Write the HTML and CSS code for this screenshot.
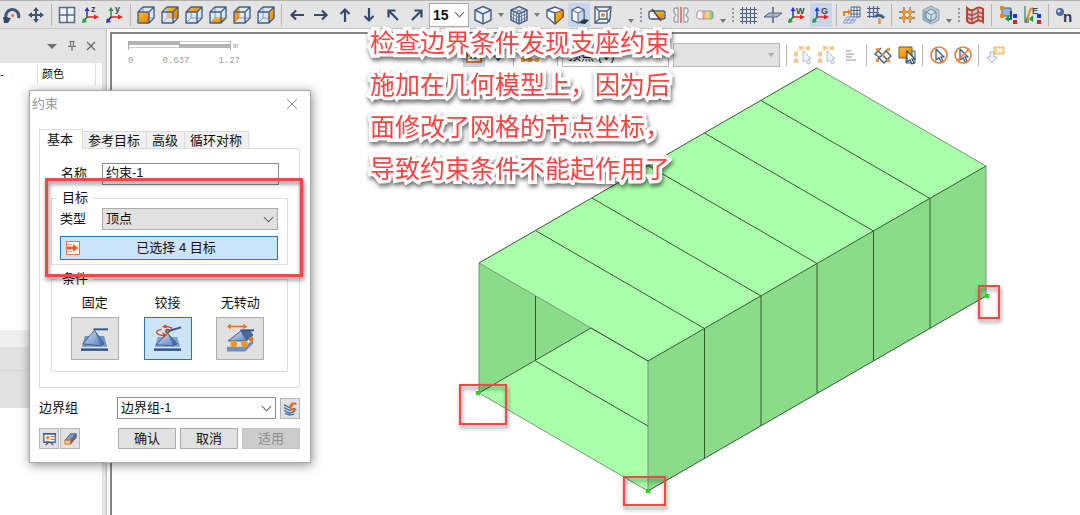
FILE: index.html
```html
<!DOCTYPE html>
<html lang="zh-CN">
<head>
<meta charset="utf-8">
<title>约束</title>
<link rel="stylesheet" href="styles.css">
</head>
<body>
<svg class="defs" width="0" height="0" aria-hidden="true">
  <defs>
    <linearGradient id="or" x1="0" y1="0" x2="1" y2="1"><stop offset="0" stop-color="#ffc31a"/><stop offset="1" stop-color="#f07800"/></linearGradient>
    <linearGradient id="bl" x1="0" y1="0" x2="1" y2="1"><stop offset="0" stop-color="#dbe9fb"/><stop offset="1" stop-color="#4f7ab8"/></linearGradient>
    <linearGradient id="rb" x1="0" y1="0" x2="1" y2="0"><stop offset="0" stop-color="#fff"/><stop offset=".25" stop-color="#fff"/><stop offset=".4" stop-color="#f59a8c"/><stop offset=".65" stop-color="#f5e07a"/><stop offset="1" stop-color="#6cc46c"/></linearGradient>
  </defs>
  <symbol id="cube" viewBox="0 0 20 20"><path d="M2 7 7 2h11v11l-5 5H2z" fill="#dbe7f3"/><path d="M7 2v11h11M7 13l-5 5" fill="none" stroke="#8499b8"/></symbol>
  <symbol id="cubeEdge" viewBox="0 0 20 20"><path d="M2 7 7 2h11v11l-5 5H2zM2 7h11v11M13 7l5-5" fill="none" stroke="#465f88" stroke-width="1.4" stroke-linejoin="round"/></symbol>
  <symbol id="rotate" viewBox="0 0 20 20"><path d="M4.500 14A6.500 6.500 0 1 1 16.500 13" fill="none" stroke="#435878" stroke-width="3"/><path d="M1 12l8 1-3 5H2z" fill="#2f4766"/><circle cx="10.500" cy="10.500" r="1.500" fill="#f2701d"/></symbol>
  <symbol id="move" viewBox="0 0 20 20"><path d="M10 4v12M4 10h12" stroke="#3e546f" stroke-width="2"/><path d="M10 2l3 4H7zM10 18l3-4H7zM2 10l4-3v6zM18 10l-4-3v6z" fill="#3e546f"/></symbol>
  <symbol id="views" viewBox="0 0 20 20"><path d="M2.500 2.500h15v15h-15zM10 2v16M2 10h16" fill="#eef2f6" stroke="#54698a" stroke-width="1.500"/></symbol>
  <symbol id="axes" viewBox="0 0 20 20"><path d="M6 13V4" stroke="#2030f0" stroke-width="1.500"/><path d="M3.500 6L6 2l2.500 4z" fill="#2030f0"/><path d="M6 12h8" stroke="#f02020" stroke-width="1.500"/><path d="M13 9.500l5 2.500-5 2.500z" fill="#f02020"/><path d="M6 12l-3 4" stroke="#18a040" stroke-width="2"/><path d="M1 18l1-5 4 4z" fill="#18a040"/></symbol>
  <symbol id="axesY" viewBox="0 0 20 20"><path d="M6 13V4" stroke="#18a040" stroke-width="1.500"/><path d="M3.500 6L6 2l2.500 4z" fill="#18a040"/><path d="M6 12h8" stroke="#f02020" stroke-width="1.500"/><path d="M13 9.500l5 2.500-5 2.500z" fill="#f02020"/><path d="M6 12l-3 4" stroke="#2030f0" stroke-width="2"/><path d="M1 18l1-5 4 4z" fill="#2030f0"/></symbol>
  <symbol id="arrow" viewBox="0 0 20 20"><path d="M4.500 10H17M9 5.500L4.500 10 9 14.500" fill="none" stroke="#344c69" stroke-width="2.200"/></symbol>
  <symbol id="diag" viewBox="0 0 20 20"><path d="M5.500 5.500L15 15M5.500 12.500v-7h7" fill="none" stroke="#344c69" stroke-width="2.200"/></symbol>
  <symbol id="iso" viewBox="0 0 20 20"><path d="M10 1.500l8 3.500v10l-8 4-8-4V5z" fill="#e3eef8" stroke="#4b6287" stroke-width="1.500"/><path d="M2 5l8 4 8-4M10 9v10" fill="none" stroke="#4b6287" stroke-width="1.500"/></symbol>
  <symbol id="select" viewBox="0 0 20 20"><path d="M3 16V8l5-5h6" fill="none" stroke="#f3c08d"/><path d="M1 14h4v4H1zM1 7h4v4H1zM6 1h4v4H6zM13 1h4v4h-4z" fill="#f8c989"/><path d="M10 6v11l3-2 2 4 2-1-2-4h3z" fill="#f3f7fb" stroke="#aebccd"/></symbol>
  <symbol id="cursor" viewBox="0 0 20 20"><path d="M7 4v11l3-2 2 4 2-1-2-4h3z" fill="#e7f0fa" stroke="#3f5878" stroke-width="1.200"/></symbol>
</svg>

<header class="toolbar" role="toolbar" aria-label="视图工具栏">
  <button class="tool" aria-label="旋转"><svg><use href="#rotate"/></svg></button>
  <button class="tool" aria-label="平移"><svg><use href="#move"/></svg></button>
  <i class="sep"></i>
  <button class="tool" aria-label="四视图"><svg><use href="#views"/></svg></button>
  <button class="tool" aria-label="Z 轴"><svg viewBox="0 0 20 20"><use href="#axes"/><text class="glyph" x="10" y="7">z</text></svg></button>
  <button class="tool" aria-label="Y 轴"><svg viewBox="0 0 20 20"><use href="#axesY"/><text class="glyph" x="10" y="7">y</text></svg></button>
  <i class="sep"></i>
  <button class="tool" aria-label="前视图"><svg viewBox="0 0 20 20"><use href="#cube"/><path d="M2 7h11v11H2z" fill="url(#or)"/><use href="#cubeEdge"/></svg></button>
  <button class="tool" aria-label="后视图"><svg viewBox="0 0 20 20"><use href="#cube"/><path d="M7 2h11v11H7z" fill="url(#or)"/><path d="M2 7h11v11H2z" fill="#dbe7f3" opacity=".4"/><use href="#cubeEdge"/></svg></button>
  <button class="tool" aria-label="顶视图"><svg viewBox="0 0 20 20"><use href="#cube"/><path d="M2 7l5-5h11l-5 5z" fill="url(#or)"/><use href="#cubeEdge"/></svg></button>
  <button class="tool" aria-label="底视图"><svg viewBox="0 0 20 20"><use href="#cube"/><path d="M2 18l5-5h11l-5 5z" fill="url(#or)"/><use href="#cubeEdge"/></svg></button>
  <button class="tool" aria-label="左视图"><svg viewBox="0 0 20 20"><use href="#cube"/><path d="M2 7l5-5v11l-5 5z" fill="url(#or)"/><use href="#cubeEdge"/></svg></button>
  <button class="tool" aria-label="右视图"><svg viewBox="0 0 20 20"><use href="#cube"/><path d="M13 7l5-5v11l-5 5z" fill="url(#or)"/><use href="#cubeEdge"/></svg></button>
  <i class="sep"></i>
  <button class="tool" aria-label="向左"><svg><use href="#arrow"/></svg></button>
  <button class="tool" aria-label="向右"><svg class="half"><use href="#arrow"/></svg></button>
  <button class="tool" aria-label="向上"><svg class="quarter"><use href="#arrow"/></svg></button>
  <button class="tool" aria-label="向下"><svg class="threeq"><use href="#arrow"/></svg></button>
  <button class="tool" aria-label="左上"><svg><use href="#diag"/></svg></button>
  <button class="tool" aria-label="右上"><svg class="quarter"><use href="#diag"/></svg></button>
  <span class="pick pick-angle"><select aria-label="角度"><option>15</option></select></span>
  <button class="tool" aria-label="等轴视图"><svg><use href="#iso"/></svg></button>
  <i class="caret"></i>
  <button class="tool" aria-label="网格显示"><svg viewBox="0 0 20 20"><use href="#iso"/><path d="M2 8.500l8 4 8-4M2 12l8 4 8-4M4.500 6v10M7.500 8v10M12.500 8v10M15.500 6v10M5 3.500l8 4M15 3.500l-8 4" fill="none" stroke="#4b6287" stroke-width=".8"/></svg></button>
  <i class="caret"></i>
  <button class="tool" aria-label="剖面"><svg viewBox="0 0 20 20"><path d="M2 5l8-3 8 3v7l-8 7-8-7z" fill="#f7f9fb" stroke="#4b6287" stroke-width="1.400"/><path d="M10 8l8-3v7l-8 7z" fill="url(#or)" stroke="#7a4a28"/><path d="M2 5l8 3v11" fill="none" stroke="#4b6287" stroke-width="1.400"/></svg></button>
  <button class="tool active" aria-label="阴影"><svg viewBox="0 0 20 20"><path d="M9 18l6-4 5 1-4 4z" fill="#333"/><path d="M3 5l6-3 6 3v9l-6 4-6-3z" fill="#f4f8fc" stroke="#4b6287" stroke-width="1.300"/><path d="M9 8l6-3v9l-6 4z" fill="#cbd7e4" stroke="#4b6287"/><path d="M3 5l6 3" stroke="#4b6287"/></svg></button>
  <button class="tool" aria-label="透视"><svg viewBox="0 0 20 20"><path d="M2 2h16l-1 12-3 4H2z" fill="#e9f0f7" stroke="#4b6287" stroke-width="1.400"/><path d="M6 6h8v8H6zM2 2l4 4M18 2l-4 4M14 14l3 3M6 14l-4 4" fill="none" stroke="#4b6287" stroke-width="1.300"/><circle cx="10" cy="10" r="2" fill="#f28a20"/></svg></button>
  <i class="caret caret-low"></i>
  <i class="grip"></i>
  <button class="tool" aria-label="隐藏"><svg viewBox="0 0 20 20"><rect x="2" y="6" width="16" height="8" rx="2" fill="#f6f7f8" stroke="#3d5372" stroke-width="1.300"/><path d="M7 7h9q1 0 1 1v4q0 1-1 1h-5z" fill="url(#or)"/><path d="M5 4l9 12" stroke="#52443c" stroke-width="1.400"/></svg></button>
  <button class="tool" aria-label="反转"><svg viewBox="0 0 20 20"><path d="M7 3H5Q3 3 3 5v2l2 3-2 3v2q0 2 2 2h2zM13 3h2q2 0 2 2v2l-2 3 2 3v2q0 2-2 2h-2z" fill="#f2f3f4" stroke="#99a2ad" stroke-width="1.300"/><path d="M10 2v16" stroke="#e04a3a" stroke-width="1.300"/></svg></button>
  <button class="tool" aria-label="颜色"><svg viewBox="0 0 20 20"><rect x="2" y="6" width="16" height="8" rx="2" fill="url(#rb)" stroke="#8d99a5"/></svg></button>
  <i class="caret"></i>
  <i class="grip"></i>
  <button class="tool" aria-label="网格"><svg viewBox="0 0 20 20"><path d="M3.500 2v17M7.500 2v17M11.500 2v17M15.500 2v17M1 4.500h17M1 8.500h17M1 12.500h17M1 16.500h17" stroke="#4a6286"/></svg></button>
  <button class="tool" aria-label="工作平面"><svg viewBox="0 0 20 20"><path d="M1 12l5-4h13l-5 4z" fill="#9fc0e4" stroke="#4a6286"/><path d="M10 2v6M10 12v6" stroke="#4a6286" stroke-width="1.500"/><circle cx="10" cy="10" r="1.500" fill="#f28a20"/></svg></button>
  <button class="tool" aria-label="工作坐标"><svg viewBox="0 0 20 20"><use href="#axes"/><text class="glyph" x="9" y="9">W</text></svg></button>
  <button class="tool active" aria-label="整体坐标"><svg viewBox="0 0 20 20"><use href="#axes"/><text class="glyph" x="10" y="9">G</text></svg></button>
  <i class="sep"></i>
  <button class="tool" aria-label="移动网格"><svg viewBox="0 0 20 20"><path d="M9 2h9v10H9zM12 2v10M15 2v10M9 5.500h9M9 9h9" fill="#f2f6fa" stroke="#4a6286"/><path d="M5 12h10l-4 6H1zM8 12l-4 6M12 12l-4 6M3 15h10" fill="#e8eef5" stroke="#7e9cc4"/><path d="M2 11V7h5" fill="none" stroke="#f08020" stroke-width="2"/><path d="M6 4l3 3-3 3z" fill="#f08020"/></svg></button>
  <button class="tool" aria-label="网格设置"><svg viewBox="0 0 20 20"><path d="M3.500 1v12M7.500 1v12M11.500 1v9M1 3.500h13M1 7.500h12M1 11.500h9" stroke="#4a6286" stroke-width="1.200"/><path d="M9 12q4-4 9 1" fill="none" stroke="#3d5f90" stroke-width="3"/><path d="M13.500 13v6" stroke="#f08a30" stroke-width="2.500"/></svg></button>
  <i class="sep"></i>
  <button class="tool" aria-label="捕捉"><svg viewBox="0 0 20 20"><path d="M7 2v16M13 2v16M2 7h16M2 13h16" stroke="#8a7350" stroke-width="1.300"/><path d="M5 5h4v4H5zM11 5h4v4h-4zM5 11h4v4H5zM11 11h4v4h-4z" fill="#f59a2a"/></svg></button>
  <button class="tool" aria-label="实体"><svg viewBox="0 0 20 20"><path d="M10 1l8 4v10l-8 4-8-4V5z" fill="#b8c8d2" stroke="#8fa3b0"/><path d="M2 5l8 4v10l-8-4z" fill="#93adc0"/><path d="M10 4l5 3v6l-5 3-5-3V7z" fill="#cfe0ea" stroke="#6a8aa2"/><path d="M5 7l5 3 5-3M10 10v6" stroke="#6a8aa2" fill="none"/></svg></button>
  <i class="caret"></i>
  <i class="grip"></i>
  <button class="tool" aria-label="结果"><svg viewBox="0 0 20 20"><path d="M2 3q4 4 8 1 4-3 8 0v13q-4-3-8 0-4 3-8-1z" fill="#b5cbe6" stroke="#c8401c" stroke-width="2"/><path d="M2 8q4 4 8 1t8 0M2 12q4 4 8 1t8 0M7 5v12M13 4v12" stroke="#c8401c" fill="none" stroke-width="1.300"/></svg></button>
  <i class="sep sep-wide"></i>
  <button class="tool" aria-label="单元坐标"><svg viewBox="0 0 20 20"><path d="M3 3h9v8H3z" fill="#8fb3e6" stroke="#4a6286"/><path d="M1 1h4v4H1zM1 9h4v4H1z" fill="#f28a20"/><path d="M12 6v8h-4" fill="none" stroke="#222" stroke-width="1.500"/><path d="M10 10l-4 4 4 3z" fill="#18a040"/><path d="M14 9h4v4h-4z" fill="#2030f0"/><path d="M14 15h4v4h-4z" fill="#e02020"/></svg></button>
  <button class="tool" aria-label="局部坐标"><svg viewBox="0 0 20 20"><path d="M2 1v16h4M3 16L8 3" fill="none" stroke="#4c7c70" stroke-width="1.300"/><path d="M5 16q0-12 5-13" fill="none" stroke="#f28a20" stroke-width="2"/><text class="glyph" x="9" y="9">E</text><path d="M10 10l-4 4 4 3z" fill="#18a040"/><path d="M14 9h4v4h-4z" fill="#2030f0"/><path d="M14 15h4v4h-4z" fill="#e02020"/></svg></button>
  <i class="sep"></i>
  <button class="tool" aria-label="节点编号"><svg viewBox="0 0 20 20"><circle cx="6" cy="7" r="4" fill="#4b6c9d"/><circle cx="5" cy="6" r="1.500" fill="#cfe0f5"/><text class="glyph big" x="9" y="17">n</text></svg></button>
</header>

<main class="workspace">
  <aside class="side">
    <div class="side-head">
      <i class="side-menu"></i>
      <svg class="side-icon" viewBox="0 0 12 12"><path d="M3.500 1.500h5M4.500 1.500v5M7.500 1.500v5M2 6.500h8M6 6.500V11" fill="none" stroke="#6c6c6c" stroke-width="1.200"/></svg>
      <svg class="side-icon" viewBox="0 0 12 12"><path d="M2 2l8 8M10 2l-8 8" stroke="#666" stroke-width="1.300"/></svg>
    </div>
    <div class="side-cols"><span>-</span><span>颜色</span><span></span></div>
    <div class="side-body"><div class="side-row"></div><div class="side-row dark"></div><div class="side-row dark tall"></div></div>
  </aside>

  <section class="viewport" aria-label="模型视图">
    <svg class="model" viewBox="470 60 540 450">
      <g stroke-width="1" stroke-linejoin="round">
        <path d="M479 263v130l112-65z" fill="#8adb8a"/>
        <path d="M479 393l112-65 57 33v130z" fill="#aaffaa"/>
        <path d="M479 263L817 68l169 98-338 195z" fill="#aaffaa"/>
        <path d="M648 361l338-195v130L648 491z" fill="#8adb8a"/>
        <path d="M479 263v130l169 98V361zM817 68l169 98v130" fill="none" stroke="#749774"/>
        <path d="M479 263L817 68M648 361l338-195M648 491l338-195M479 393l112-65M535.500 296v65l112.500 65M591 328l57 33" fill="none" stroke="#355b35"/>
        <path d="M535.500 230.500l169 98v130M592 198l169 98v130M648 165.500l169 98v130M704.500 133l169 98v130M761 100.500l169 98v130" fill="none" stroke="#355b35"/>
      </g>
      <path d="M476 391h4v4h-4zM646 489h4v4h-4zM985 294h4v4h-4z" fill="#0be80b"/>
    </svg>

    <div class="snapbar" role="toolbar" aria-label="选择工具栏">
      <button class="tool active" aria-label="矩形选择"><svg viewBox="0 0 20 20"><rect x="3" y="3" width="14" height="14" fill="#fff" stroke="#e2762b" stroke-width="2"/><path d="M7 7h6l-6 6h6" fill="none" stroke="#3f5878" stroke-width="1.500"/></svg></button>
      <button class="tool" aria-label="确认选择"><svg viewBox="0 0 20 20"><path d="M4 8l6 7 6-7" fill="none" stroke="#4a6286" stroke-width="2"/></svg></button>
      <i class="sep"></i>
      <button class="tool" aria-label="节点"><svg viewBox="0 0 20 20"><path d="M3 15h14M4 9l6-5 6 5" fill="none" stroke="#4a6286"/><path d="M1 13h4v4H1zM8 13h4v4H8zM15 13h4v4h-4z" fill="#f59a2a"/></svg></button>
      <i class="sep sep-far"></i>
      <span class="pick pick-type"><select aria-label="选择类型"><option>顶点 (V)</option></select></span>
      <span class="pick pick-off"><select aria-label="过滤" disabled><option></option></select></span>
      <i class="sep"></i>
      <button class="tool" aria-label="折线选择"><svg><use href="#select"/></svg></button>
      <button class="tool" aria-label="曲线选择"><svg><use href="#select"/></svg></button>
      <button class="tool" aria-label="列表"><svg viewBox="0 0 20 20"><path d="M5 6h5M5 9h8M5 12h6M5 15h10" stroke="#b2b7bc" stroke-width="1.300"/></svg></button>
      <i class="sep"></i>
      <button class="tool" aria-label="交叉选择"><svg viewBox="0 0 20 20"><path d="M10 10L6 5 2 9l5 4zM10 10l4-6 4 5-4 4zM10 10l4 4-4 4-4-4z" fill="#edf4fa"/><path d="M3 4l14 13M3 16L16 3M8 3L2 9l5 4M13 6l5 5-7 7-5-5" fill="none" stroke="#405a7b" stroke-width="1.300"/><path d="M3 3h3v3H3zM14 3h3v3h-3zM3 14h3v3H3zM14 14h3v3h-3zM8.500 8.500h3v3h-3z" fill="#f59a2a"/></svg></button>
      <button class="tool" aria-label="面选择"><svg viewBox="0 0 20 20"><path d="M9 6h9v12H9z" fill="#dce8f5" stroke="#405a7b"/><path d="M2 2h13v11H2z" fill="url(#or)" stroke="#5d5b4d"/><path d="M10 6v11l3-2 2 4 2-1-2-4h3z" fill="#fff" stroke="#304966" stroke-width="1.200"/></svg></button>
      <i class="sep"></i>
      <button class="tool" aria-label="选择"><svg viewBox="0 0 20 20"><use href="#cursor"/><circle cx="10" cy="10" r="8" fill="none" stroke="#ee7b35" stroke-width="1.600"/></svg></button>
      <button class="tool" aria-label="取消选择"><svg viewBox="0 0 20 20"><use href="#cursor"/><circle cx="10" cy="10" r="8" fill="none" stroke="#ee7b35" stroke-width="1.600"/><path d="M4 16L16 4" stroke="#ee7b35" stroke-width="1.600"/></svg></button>
      <i class="sep"></i>
      <button class="tool" aria-label="选择 3D"><svg viewBox="0 0 20 20"><path d="M9 2h10v7H9z" fill="#fbd69b" stroke="#eeb96c"/><path d="M12 4h2v3h-2M15 4h1l1 1v1l-1 1h-1z" fill="none" stroke="#fff"/><path d="M9 7H5v5H2l5 6 5-6H9z" fill="#edf2f8" stroke="#a7b6ca"/></svg></button>
    </div>

    <div class="ruler">
      <div class="ruler-bar"><i></i><i></i><span>m</span></div>
      <div class="ruler-nums"><span>0</span><span>0.637</span><span>1.27</span></div>
    </div>
  </section>
</main>

<form class="dialog" role="dialog" aria-labelledby="dlg-title">
  <div class="dialog-title"><span id="dlg-title">约束</span>
    <button type="button" class="close" aria-label="关闭"><svg viewBox="0 0 12 12"><path d="M1 1l10 10M11 1L1 11" stroke="#8c8c8c"/></svg></button>
  </div>
  <div class="tabs" role="tablist">
    <button type="button" role="tab" class="tab on" aria-selected="true">基本</button>
    <button type="button" role="tab" class="tab">参考目标</button>
    <button type="button" role="tab" class="tab">高级</button>
    <button type="button" role="tab" class="tab">循环对称</button>
  </div>
  <div class="panel">
    <div class="field field-name"><label for="name">名称</label><input id="name" type="text" value="约束-1"></div>
    <fieldset class="target">
      <legend>目标</legend>
      <div class="field"><label for="type">类型</label><span class="pick pick-gray"><select id="type"><option>顶点</option></select></span></div>
      <button type="button" class="chosen"><svg viewBox="0 0 14 14"><path d="M.5.500h13v13H.5z" fill="#fff" stroke="#f07045"/><path d="M1 3.500h5M1 10.500h5" stroke="#f4a080"/><path d="M1 5.500h6V3l5.500 4L7 11V8.500H1z" fill="#f4602c"/></svg><span>已选择 4 目标</span></button>
    </fieldset>
    <fieldset class="conds">
      <legend>条件</legend>
      <div class="cond"><label for="c1">固定</label><button type="button" id="c1"><svg viewBox="0 0 30 28"><path d="M5 11h20l3 11H2z" fill="#6f94c8"/><path d="M15 5l10 14-4 2L3 19z" fill="url(#bl)" stroke="#3d5c8d"/><path d="M15 5l6 16 4-2z" fill="#3f68a6" opacity=".6"/><path d="M1 25h28" stroke="#2d5287" stroke-width="2.500"/><path d="M14 4h15" stroke="#31568d" stroke-width="2"/></svg></button></div>
      <div class="cond"><label for="c2">铰接</label><button type="button" id="c2" class="on"><svg viewBox="0 0 30 28"><path d="M5 12h20l3 10H2z" fill="#7d9fce"/><path d="M15 8l10 11-4 2-18-1z" fill="url(#bl)" stroke="#3d5c8d"/><path d="M15 8l6 13 4-2z" fill="#2f588f" opacity=".6"/><path d="M1 25h28" stroke="#2d5287" stroke-width="2.500"/><path d="M15 6l14-4" stroke="#31568d" stroke-width="2"/><path d="M20 3q-5-3-9-1M9 4Q3 5 4 8q2 3 8 2" fill="none" stroke="#ee3a1a" stroke-width="1.400"/><path d="M10 7l5 3-5 3zM14-1v4l-5-2z" fill="#ee3a1a"/><circle cx="15" cy="6" r="2" fill="#c98010" stroke="#513a12"/></svg></button></div>
      <div class="cond"><label for="c3">无转动</label><button type="button" id="c3"><svg viewBox="0 0 30 28"><path d="M1 22h19l8-8v5l-8 8H1z" fill="#6f8fc0"/><path d="M15 6L2 16h19l7-6-3-4z" fill="url(#bl)" stroke="#3d5c8d"/><path d="M15 6l6 10 7-6-3-4z" fill="#44689d"/><circle cx="8" cy="19" r="3.500" fill="#f59a10"/><circle cx="19" cy="19" r="3.500" fill="#f59a10"/><circle cx="26" cy="14" r="2.500" fill="#e07a10"/><path d="M15 5h14" stroke="#31568d" stroke-width="2"/><path d="M4 1h16" stroke="#f2701d" stroke-width="1.600"/><path d="M1 1l4-3v6zM22 1l-4-3v6z" fill="#f2701d"/></svg></button></div>
    </fieldset>
  </div>
  <div class="group-row">
    <label for="group">边界组</label>
    <span class="pick pick-group"><select id="group"><option>边界组-1</option></select></span>
    <button type="button" class="mini" aria-label="边界组设置"><svg viewBox="0 0 16 16"><path d="M1 4l6 3 4-3M1 7l6 3 6-2M1 10l6 3 6-2M2 13l5 2 5-1" fill="none" stroke="#5577a5" stroke-width="1.600"/><path d="M14 3.500A3.500 3.500 0 1 0 14 8.500" fill="none" stroke="#f06a20" stroke-width="2.400"/></svg></button>
  </div>
  <div class="actions">
    <span class="minis">
      <button type="button" class="mini" aria-label="说明"><svg viewBox="0 0 16 16"><path d="M2 3h12v9H2z" fill="#fff" stroke="#3c6094" stroke-width="1.400"/><path d="M1 3h14M4 15l3-3M12 15l-3-3" stroke="#3c6094" stroke-width="1.500"/><circle cx="6" cy="7" r="2" fill="#f28a20"/><path d="M9 6h4M9 9h4M4 11h4" stroke="#c05a28"/></svg></button>
      <button type="button" class="mini" aria-label="清除"><svg viewBox="0 0 16 16"><path d="M2 10l6-7h6l-6 7z" fill="#7b9bc8" stroke="#3f5f8c"/><path d="M8 10l6-7v4l-6 7z" fill="#b3573a" stroke="#3f5f8c"/><path d="M2 10h6v4H2z" fill="#f7c68a" stroke="#c97a3c"/></svg></button>
    </span>
    <span class="answers">
      <button type="submit">确认</button>
      <button type="button">取消</button>
      <button type="button" disabled>适用</button>
    </span>
  </div>
</form>

<p class="note">检查边界条件发现支座约束<br>施加在几何模型上，因为后<br>面修改了网格的节点坐标，<br>导致约束条件不能起作用了</p>
<i class="mark mark-target"></i>
<i class="mark mark-left"></i>
<i class="mark mark-bottom"></i>
<i class="mark mark-right"></i>
</body>
</html>
```

FILE: styles.css
```css
* { box-sizing: border-box; }

body {
  margin: 0;
  height: 100vh;
  display: flex;
  flex-direction: column;
  position: relative;
  overflow: hidden;
  background: #fff;
  color: #111;
  font: 13px/18px "Liberation Sans", "Noto Sans CJK SC", sans-serif;
}

button, input, select { font: inherit; color: inherit; margin: 0; padding: 0; border-radius: 0; }
i { font-style: normal; }
.defs { position: absolute; }

/* toolbars */
.toolbar {
  display: flex;
  align-items: center;
  flex: none;
  height: 29px;
  background: #e4e4e4;
  border-top: 1px solid #b2b2b2;
  border-bottom: 1px solid #c4c4c4;
}
.tool {
  flex: none;
  display: grid;
  place-items: center;
  width: 24px;
  height: 24px;
  border: 0;
  background: none;
}
.tool svg { width: 20px; height: 20px; overflow: visible; }
.tool.active { background: #c8d6ec; background-clip: content-box; padding: 0 1px; }
.half { transform: rotate(180deg); }
.quarter { transform: rotate(90deg); }
.threeq { transform: rotate(270deg); }
.glyph { font: bold 9px "Liberation Sans", sans-serif; fill: #3a4654; }
.glyph.big { font-size: 15px; fill: #243b5c; }
.sep { flex: none; width: 1px; height: 22px; margin: 0 3px; background: #b6b6b6; }
.sep-wide { margin: 0 5px 0 4px; }
.caret { flex: none; width: 12px; height: 4px; display: grid; place-items: center; }
.caret::before { content: ""; border: 3px solid transparent; border-top: 4px solid #777; border-bottom: 0; }
.caret-low { margin: 12px 0 0 10px; }
.caret:has(+ .grip) { margin-top: 12px; }
.grip { flex: none; width: 2px; height: 14px; margin: 0 3px; background: repeating-linear-gradient(#999 0 2px, transparent 2px 4px); }

/* drop-downs */
.pick { position: relative; display: block; flex: none; }
.pick select {
  display: block;
  width: 100%;
  height: 22px;
  padding: 0 3px;
  border: 1px solid #8c8c8c;
  background: #fff;
  appearance: none;
  outline: 0;
}
.pick::after {
  content: "";
  position: absolute;
  right: 6px;
  top: 6px;
  width: 6px;
  height: 6px;
  border: solid #666;
  border-width: 0 1px 1px 0;
  transform: rotate(45deg);
  pointer-events: none;
}
.pick-angle { width: 40px; margin-right: 2px; }
.pick-angle select { height: 24px; padding: 0 3px; border-color: #aaa; font-size: 14px; font-weight: bold; }
.pick-type { width: 107px; margin-right: 4px; }
.pick-type select, .pick-off select { height: 24px; border-color: #b5b9be; }
.pick-type select { padding: 2px 5px 0; }
.pick-off { width: 107px; margin-right: 3px; }
.pick-off select { background: #e3e3e3; opacity: 1; }
.pick-type::after { content: none; }
.pick-off::after { width: 0; height: 0; top: 10px; border: 3px solid transparent; border-top: 4px solid #aaa; border-bottom: 0; transform: none; }
.pick-gray { flex: 1; }
.pick-gray select { background: #e1e1e1; border-color: #acacac; }

/* side panel */
.workspace { flex: 1; display: flex; min-height: 0; }
.side { flex: none; width: 107px; display: flex; flex-direction: column; border-right: 1px solid #bdbdbd; box-shadow: inset -4px 0 #e4e4e4; }
.side-head { display: flex; align-items: center; justify-content: flex-end; gap: 7px; height: 34px; padding-right: 9px; background: #e4e4e4; }
.side-menu { border: 5px solid transparent; border-top: 5px solid #707070; border-bottom: 0; margin-right: 2px; }
.side-icon { width: 12px; height: 12px; }
.side-cols { display: grid; grid-template-columns: 38px 58px 7px; height: 22px; font-size: 11px; line-height: 22px; }
.side-cols span { border-right: 1px solid #e2e2e2; padding-left: 4px; }
.side-cols span:first-child { padding: 0; }
.side-body { flex: 1; width: 102px; padding-top: 245px; }
.side-row { height: 17px; background: #efefef; }
.side-row.dark { height: 24px; background: #e2e2e2; border-bottom: 1px solid #d6d6d6; }
.side-row.tall { height: 37px; border: 0; }

/* model view */
.viewport {
  flex: 1;
  min-width: 0;
  margin: 3px 0 0 3px;
  position: relative;
  border: 2px solid #858585;
  border-right: 0;
  border-bottom: 0;
}
.model { position: absolute; left: 358px; top: 26px; width: 540px; height: 450px; }
.snapbar { position: relative; display: flex; align-items: center; padding: 9px 0 0 350px; }
.snapbar .sep { margin: 0 4px 0 3px; }
.snapbar .sep-far { margin: 0 4px 0 15px; }
.ruler { position: absolute; left: 16px; top: 7px; width: 112px; color: #a0a0a0; }
.ruler-bar { display: flex; height: 9px; width: 103px; border: solid #aaa; border-width: 0 1px; position: relative; }
.ruler-bar i { flex: 1; border: solid #ccc; border-width: 1px 0; }
.ruler-bar i:first-child { border-top: 4px solid #b4b4b4; border-right: 1px solid #aaa; margin-bottom: 2px; }
.ruler-bar i:nth-child(2) { border-bottom: 4px solid #b4b4b4; margin-bottom: 2px; }
.ruler-bar span { position: absolute; left: 104px; top: 0; font: 8px/9px "Liberation Mono", monospace; }
.ruler-nums { display: flex; justify-content: space-between; font: 9px/12px "Liberation Mono", monospace; margin-top: 5px; }

/* dialog */
.dialog {
  position: absolute;
  left: 29px;
  top: 90px;
  width: 282px;
  padding: 0 10px 13px 9px;
  background: #fff;
  border: 1px solid #a9a9a9;
  box-shadow: 1px 2px 10px rgba(0, 0, 0, .45);
}
.dialog-title { display: flex; justify-content: space-between; align-items: center; height: 26px; margin: 0 -3px 12px -7px; color: #9a9a9a; }
.close { border: 0; background: none; width: 22px; height: 22px; display: grid; place-items: center; }
.close svg { width: 12px; height: 12px; }
.tabs { display: flex; align-items: flex-end; }
.tab { height: 17px; padding: 0 6px 0 5px; line-height: 17px; border: 1px solid #dcdcdc; border-width: 1px 1px 0 0; background: #f0f0f0; }
.tab.on { height: 20px; margin-bottom: -1px; padding: 0 9px 0 7px; border-left-width: 1px; background: #fff; position: relative; }
.panel { border: 1px solid #dcdcdc; padding: 14px 11px 15px; }
.field { display: flex; align-items: center; }
.field label { flex: none; width: 42px; }
.field-name { padding: 0 9px 0 10px; }
.field-name label { width: 41px; }
.field-name input { flex: 1; min-width: 0; height: 22px; padding: 0 3px 5px; border: 1px solid #8c8c8c; outline: 0; }
fieldset { margin: 4px 0 0; min-width: 0; border: 1px solid #dcdcdc; }
legend { padding: 0 5px; height: 18px; line-height: 18px; }
.target { padding: 1px 9px 4px 8px; }
.target legend { margin-left: -3px; }
.chosen { display: grid; grid-template-columns: 14px 1fr; align-items: center; width: 100%; height: 24px; margin-top: 6px; padding: 0 5px; border: 1px solid #2f75b5; background: #cce4f7; }
.chosen svg { width: 14px; height: 14px; }
.conds { display: flex; gap: 7px; margin-top: 5px; padding: 6px 14px 11px 10px; }
.conds legend { margin-left: -5px; }
.cond { flex: 1; display: grid; justify-items: center; gap: 5px; }
.cond button { width: 48px; height: 43px; display: grid; place-items: center; border: 1px solid #adadad; background: #e1e1e1; }
.cond button.on { border-color: #2f75b5; background: #cce4f7; }
.cond svg { width: 29px; height: 28px; overflow: visible; }
.group-row { display: flex; align-items: center; margin-top: 9px; }
.group-row label { width: 78px; }
.pick-group { flex: 1; margin-right: 4px; }
.mini { width: 20px; height: 21px; display: grid; place-items: center; border: 1px solid #b5b5b5; background: #e1e1e1; }
.mini svg { width: 15px; height: 15px; }
.actions { display: flex; justify-content: space-between; margin-top: 9px; }
.minis { display: flex; gap: 1px; }
.answers { display: flex; gap: 4px; }
.answers button { width: 58px; height: 21px; line-height: 18px; border: 1px solid #adadad; background: #e1e1e1; }
.answers button:disabled { background: #ccc; border-color: #c4c4c4; color: #8c8c8c; }

/* annotations */
.note {
  position: absolute;
  left: 370px;
  top: 20px;
  margin: 0;
  color: #ff4343;
  font: 400 25px/42px "Noto Sans CJK SC", sans-serif;
  white-space: nowrap;
  -webkit-text-stroke: 7px #fff;
  paint-order: stroke fill;
  stroke-linejoin: round;
  filter: drop-shadow(1px 3px 2px rgba(0, 0, 0, .55));
}
.mark { position: absolute; border: 2px solid #f84545; filter: drop-shadow(1px 3px 2px rgba(0, 0, 0, .5)); }
.mark-target { left: 45px; top: 178px; width: 258px; height: 99px; border-width: 3px; }
.mark-left { left: 459px; top: 384px; width: 48px; height: 41px; }
.mark-bottom { left: 623px; top: 476px; width: 43px; height: 30px; }
.mark-right { left: 978px; top: 285px; width: 22px; height: 34px; }
```
